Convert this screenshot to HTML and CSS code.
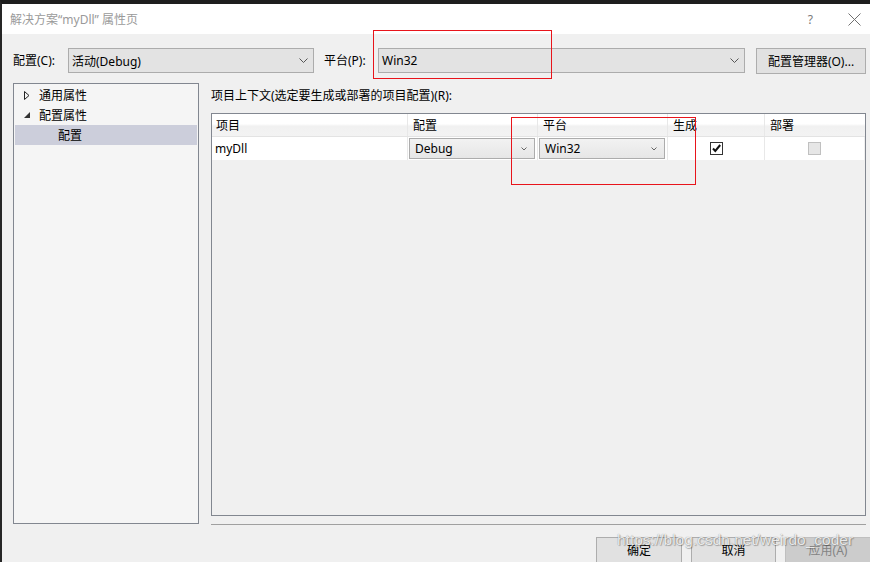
FILE: index.html
```html
<!DOCTYPE html>
<html lang="zh-CN">
<head>
<meta charset="utf-8">
<title>解决方案“myDll” 属性页</title>
<link rel="stylesheet" href="styles.css">
</head>
<body>
<div class="window">
  <div class="titlebar">
    <span class="title">解决方案“myDll” 属性页</span>
    <div class="title-btns">
      <span class="help">?</span>
      <svg class="close" width="13" height="13" viewBox="0 0 13 13"><path d="M0.5 0.5 L12.5 12.5 M12.5 0.5 L0.5 12.5" stroke="#707070" stroke-width="1" fill="none"/></svg>
    </div>
  </div>
  <div class="content">
    <div class="toprow">
      <label class="lbl lbl-config">配置(C):</label>
      <div class="combo combo-config">
        <span>活动(Debug)</span>
        <svg class="chev" width="9" height="5" viewBox="0 0 9 5"><path d="M0.5 0.5 L4.5 4.5 L8.5 0.5" stroke="#555" fill="none"/></svg>
      </div>
      <label class="lbl lbl-platform">平台(P):</label>
      <div class="combo combo-platform">
        <span>Win32</span>
        <svg class="chev" width="9" height="5" viewBox="0 0 9 5"><path d="M0.5 0.5 L4.5 4.5 L8.5 0.5" stroke="#555" fill="none"/></svg>
      </div>
      <button class="btn btn-manager">配置管理器(O)...</button>
    </div>
    <div class="main">
      <div class="tree">
        <div class="tree-item">
          <span class="twisty"><svg width="6" height="9" viewBox="0 0 6 9"><path d="M0.5 0.5 L5 4.5 L0.5 8.5 Z" stroke="#222" fill="none"/></svg></span>
          <span>通用属性</span>
        </div>
        <div class="tree-item">
          <span class="twisty"><svg width="6" height="6" viewBox="0 0 6 6"><path d="M6 0 L6 6 L0 6 Z" fill="#333"/></svg></span>
          <span>配置属性</span>
        </div>
        <div class="tree-item tree-child selected"><span>配置</span></div>
      </div>
      <div class="context">
        <div class="ctx-label">项目上下文(选定要生成或部署的项目配置)(R):</div>
        <div class="grid">
          <div class="grid-row grid-head">
            <div class="cell c1">项目</div>
            <div class="cell c2">配置</div>
            <div class="cell c3">平台</div>
            <div class="cell c4">生成</div>
            <div class="cell c5">部署</div>
          </div>
          <div class="grid-row grid-data">
            <div class="cell c1 name">myDll</div>
            <div class="cell c2 combo-cell">
              <div class="mini-combo"><span>Debug</span><svg width="6" height="4" viewBox="0 0 6 4"><path d="M0.5 0.5 L3 3 L5.5 0.5" stroke="#666" fill="none"/></svg></div>
            </div>
            <div class="cell c3 combo-cell">
              <div class="mini-combo"><span>Win32</span><svg width="6" height="4" viewBox="0 0 6 4"><path d="M0.5 0.5 L3 3 L5.5 0.5" stroke="#666" fill="none"/></svg></div>
            </div>
            <div class="cell c4 check-cell">
              <span class="check checked"><svg width="11" height="11" viewBox="0 0 11 11"><path d="M2 5.5 L4.3 8 L9.2 2" stroke="#111" stroke-width="2" fill="none"/></svg></span>
            </div>
            <div class="cell c5 check-cell">
              <span class="check disabled"></span>
            </div>
          </div>
        </div>
        <div class="separator"></div>
      </div>
    </div>
    <div class="footer">
      <button class="btn btn-ok">确定</button>
      <button class="btn btn-cancel">取消</button>
      <button class="btn btn-apply" disabled>应用(A)</button>
    </div>
  </div>
</div>
<div class="redbox redbox-1"></div>
<div class="redbox redbox-2"></div>
<div class="watermark">https://blog.csdn.net/weirdo_coder</div>
</body>
</html>
```
FILE: styles.css
```css
* { box-sizing: border-box; }
html, body { margin: 0; padding: 0; }
body {
  width: 870px;
  height: 562px;
  overflow: hidden;
  font-family: "Noto Sans", "Noto Sans CJK SC", sans-serif;
  font-size: 12px;
  color: #000;
  background: #f0f0f0;
}
.window {
  width: 870px;
  height: 562px;
  border-top: 4px solid #1e1e1e;
  border-left: 2px solid #262626;
  background: #f0f0f0;
  display: flex;
  flex-direction: column;
  overflow: hidden;
}
.titlebar {
  height: 30px;
  flex: none;
  background: #fff;
  display: flex;
  align-items: center;
  justify-content: space-between;
  padding: 0 9px 0 8px;
}
.title { color: #9a9a9a; font-size: 12px; }
.title-btns { display: flex; align-items: center; }
.help { color: #7a7a7a; font-size: 12px; margin-right: 35px; }
.close { display: block; }

.content {
  flex: 1;
  padding: 14px 0 0 11px;
  display: flex;
  flex-direction: column;
}
.toprow {
  display: flex;
  align-items: flex-start;
  height: 26px;
  padding-right: 4px;
}
.lbl { white-space: nowrap; line-height: 25px; }
.lbl-config { width: 55px; }
.lbl-platform { width: 54px; margin-left: 10px; }
.combo {
  height: 25px;
  background: #e3e3e3;
  border: 1px solid #acacac;
  display: flex;
  align-items: center;
  justify-content: space-between;
  padding: 0 5px 0 3px;
}
.combo-config { width: 246px; }
.combo-platform { flex: 1; }
.chev { display: block; }
.btn {
  font: inherit;
  color: #000;
  background: #e1e1e1;
  border: 1px solid #adadad;
  padding: 0;
  height: 26px;
}
.btn-manager { width: 110px; margin-left: 11px; }

.main {
  display: flex;
  margin-top: 9px;
  height: 442px;
  padding-right: 4px;
}
.tree {
  width: 186px;
  height: 441px;
  border: 1px solid #828790;
  background: #f5f5f5;
  padding-top: 1px;
}
.tree-item {
  height: 20px;
  display: flex;
  align-items: center;
  padding-left: 10px;
}
.twisty {
  width: 15px;
  display: flex;
  align-items: center;
}
.twisty svg { display: block; }
.tree-child { padding-left: 43px; margin: 0 1px; }
.selected { background: #cccedb; }

.context {
  flex: 1;
  margin-left: 12px;
  display: flex;
  flex-direction: column;
}
.ctx-label {
  height: 30px;
  padding-top: 3px;
  line-height: 20px;
}
.grid {
  height: 403px;
  border: 1px solid #828790;
  background: #f0f0f0;
}
.grid-row { display: flex; }
.grid-head {
  height: 23px;
  background: linear-gradient(#ffffff 0%, #ffffff 45%, #f1f1f1 55%, #f3f3f3 100%);
  border-bottom: 1px solid #e3e3e3;
}
.grid-data {
  height: 23px;
  background: #fff;
  margin-right: 1px;
}
.cell {
  display: flex;
  align-items: center;
  border-right: 1px solid #e8e8e8;
  padding-left: 5px;
}
.c1 { width: 196px; padding-left: 4px; }
.c2 { width: 130px; }
.c3 { width: 130px; }
.c4 { width: 97px; }
.c5 { flex: 1; border-right: none; }
.name { padding-left: 3px; }
.combo-cell { padding: 1px 2px 1px 1px; align-items: stretch; }
.mini-combo {
  flex: 1;
  border: 1px solid #acacac;
  background: linear-gradient(#f2f2f2, #e6e6e6);
  display: flex;
  align-items: center;
  justify-content: space-between;
  padding: 0 7px 0 5px;
}
.mini-combo svg { display: block; }
.check-cell { justify-content: center; padding-left: 0; }
.check {
  width: 13px;
  height: 13px;
  display: flex;
  align-items: center;
  justify-content: center;
}
.checked { border: 1px solid #333; background: #fff; }
.disabled { border: 1px solid #c0c0c0; background: #e6e6e6; }
.separator {
  margin-top: 8px;
  height: 1px;
  background: #a0a0a0;
}

.footer {
  display: flex;
  justify-content: flex-end;
  margin-top: 12px;
  margin-right: -1px;
  gap: 9px;
}
.btn-ok { width: 86px; }
.btn-cancel { width: 85px; }
.btn-apply { width: 86px; background: #cccccc; border-color: #bfbfbf; color: #838383; }

.redbox {
  position: absolute;
  border: 1px solid #e8141b;
}
.redbox-1 { left: 373px; top: 30px; width: 179px; height: 49px; }
.redbox-2 { left: 511px; top: 117px; width: 185px; height: 68px; }

.watermark {
  position: absolute;
  left: 617px;
  top: 531px;
  font-family: "Liberation Sans", sans-serif;
  font-size: 15.5px;
  color: rgba(255, 255, 255, 0.85);
  text-shadow: 0 0 1px rgba(0, 0, 0, 0.45), 1px 1px 1px rgba(0, 0, 0, 0.25);
  white-space: nowrap;
}
```
